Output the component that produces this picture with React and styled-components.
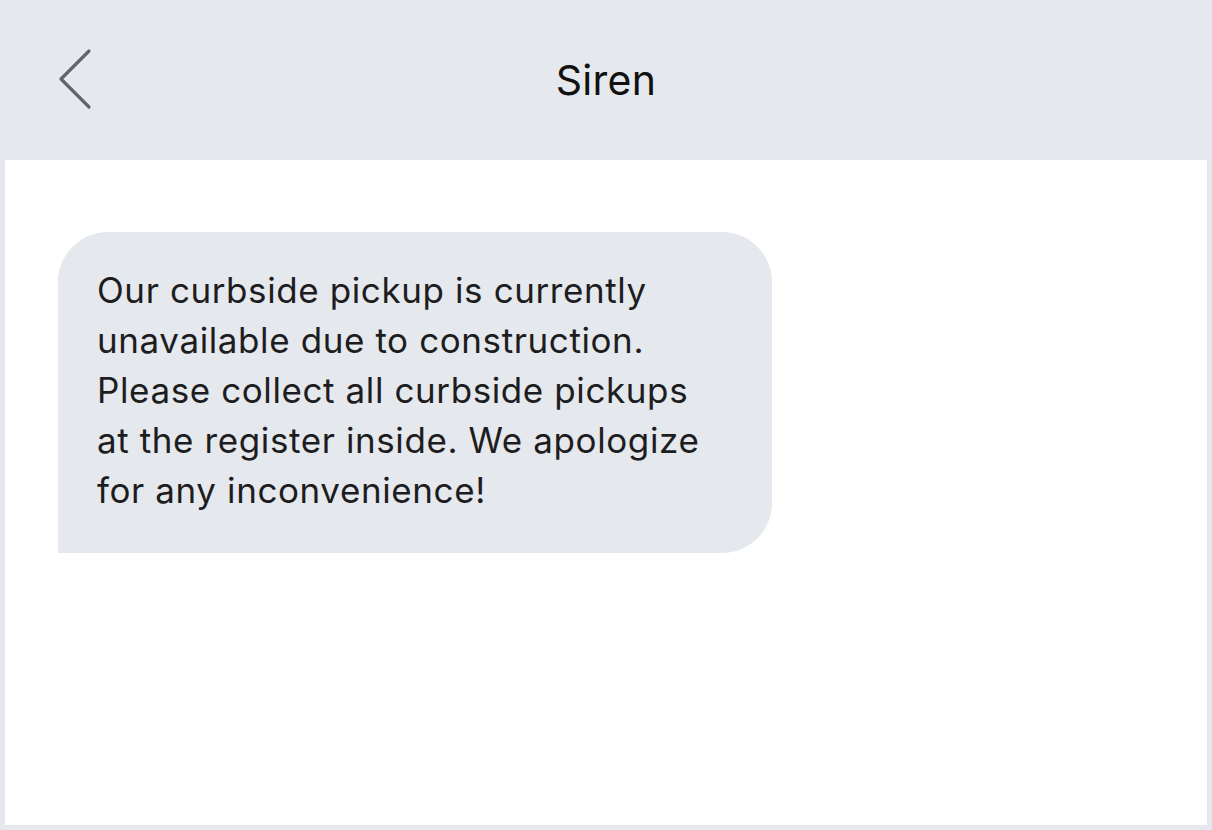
import React from "react";
import styled, { createGlobalStyle } from "styled-components";

const GlobalStyle = createGlobalStyle`
  html, body {
    margin: 0;
    padding: 0;
    background: #e5e8ec;
    font-family: Inter, Roboto, "Liberation Sans", sans-serif;
  }
`;

const Screen = styled.div`
  width: 1212px;
  height: 830px;
  display: flex;
  flex-direction: column;
  background: #e5e8ec;
  overflow: hidden;
`;

const Header = styled.header`
  height: 160px;
  flex-shrink: 0;
  display: grid;
  grid-template-columns: 160px 1fr 160px;
  align-items: center;
`;

const BackButton = styled.button`
  border: 0;
  background: none;
  padding: 0 0 0 56px;
  display: flex;
  align-items: center;
  height: 100%;
  cursor: pointer;
  svg {
    display: block;
  }
`;

const Title = styled.h1`
  margin: 0;
  text-align: center;
  font-size: 41px;
  font-weight: 400;
  letter-spacing: 0.3px;
  color: #111;
  padding-top: 0;
`;

const Thread = styled.main`
  flex: 1;
  margin: 0 5px 5px 5px;
  background: #fff;
  padding: 72px 0 0 53px;
`;

const Bubble = styled.div`
  width: 714px;
  box-sizing: border-box;
  padding: 33px 50px 38px 39px;
  background: #e5e8ec;
  border-radius: 50px 50px 50px 0;
  font-size: 35px;
  line-height: 50px;
  letter-spacing: 0.6px;
  color: #1d1d1f;
`;

const ChevronLeft = () => (
  <svg width="40" height="64" viewBox="0 0 40 64" fill="none">
    <path
      d="M33 3L5 31L33 59"
      stroke="#60656b"
      strokeWidth="3.2"
      strokeLinecap="round"
      strokeLinejoin="round"
    />
  </svg>
);

export default function App() {
  return (
    <Screen>
      <GlobalStyle />
      <Header>
        <BackButton aria-label="Back">
          <ChevronLeft />
        </BackButton>
        <Title>Siren</Title>
        <div />
      </Header>
      <Thread>
        <Bubble>
          Our curbside pickup is currently unavailable due to construction.
          Please collect all curbside pickups at the register inside. We
          apologize for any inconvenience!
        </Bubble>
      </Thread>
    </Screen>
  );
}
